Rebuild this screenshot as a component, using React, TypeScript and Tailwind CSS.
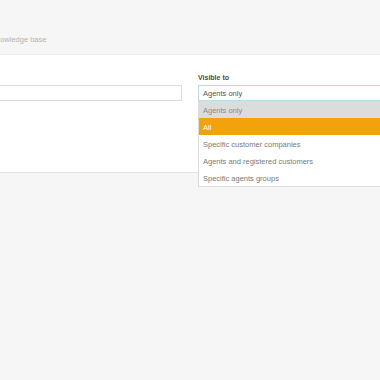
import React from "react";

const items = [
  { label: "Agents only", cls: "bg-[#dcdcdc] text-[#8a8a8a]" },
  { label: "All", cls: "bg-[#f2a20c] text-white" },
  { label: "Specific customer companies", cls: "bg-white text-[#7a7a7a]" },
  { label: "Agents and registered customers", cls: "bg-white text-[#7a7a7a]" },
  { label: "Specific agents groups", cls: "bg-white text-[#7a7a7a]" },
];

export default function App() {
  return (
    <div
      className="w-[380px] h-[380px] bg-[#f6f6f6] overflow-hidden"
      style={{ fontFamily: '"Liberation Sans", Arial, sans-serif' }}
    >
      <div className="h-[55px] border-b border-[#ececec] pt-[35px]">
        <div className="-ml-[9px] text-[7.5px] leading-[10px] text-[#b4b4b4]">Knowledge base</div>
      </div>
      <div className="h-[118px] bg-white border-b border-[#e2e2e2] flex pt-[18px]">
        <div className="w-[198px] shrink-0 pt-[12px]">
          <div className="-ml-[10px] w-[192px] h-[16px] border border-[#dcdcdc] bg-white" />
        </div>
        <div className="flex-1 relative">
          <div className="text-[7px] leading-[10px] font-bold text-[#4a4a4a]">Visible to</div>
          <div className="relative mt-[2px] w-[200px]">
            <div className="h-[16px] border border-[#b9dcec] bg-white flex items-center px-[4px] pt-[1px] text-[7.5px] text-[#555]">
              Agents only
            </div>
            <div className="absolute left-0 top-full w-[200px] border border-[#dcdcdc] border-t-0 z-10 bg-white">
              {items.map((it) => (
                <div key={it.label} className={`h-[17px] flex items-center px-[4px] pt-[2px] text-[7.5px] ${it.cls}`}>
                  {it.label}
                </div>
              ))}
            </div>
          </div>
        </div>
      </div>
    </div>
  );
}
